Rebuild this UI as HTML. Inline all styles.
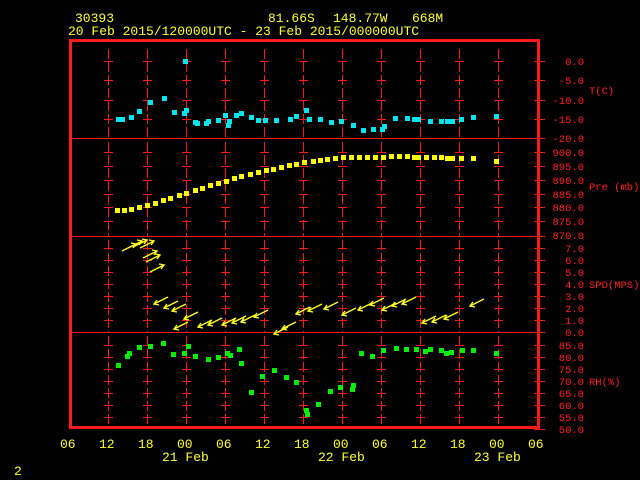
<!DOCTYPE html>
<html><head><meta charset="utf-8"><style>
html,body{margin:0;padding:0;background:#000;width:640px;height:480px;overflow:hidden}
svg{display:block}
text{font-family:"Liberation Mono",monospace}
.h{fill:#ffff33;font-size:13px}
.r{fill:#ff2020;font-size:10.5px;text-anchor:end}
.u{fill:#ff2020;font-size:10.5px}
.b{fill:#ffff33;font-size:13px}
</style></head><body>
<svg id="s" width="640" height="480" xmlns="http://www.w3.org/2000/svg">
<text class="h" x="75" y="22">30393</text>
<text class="h" x="268" y="22">81.66S</text>
<text class="h" x="333" y="22">148.77W</text>
<text class="h" x="412" y="22">668M</text>
<text class="h" x="68" y="35">20 Feb 2015/120000UTC - 23 Feb 2015/000000UTC</text>
<g id="grid" stroke="#ff1a1a" stroke-width="1"></g>
<g id="pts"></g>
<g id="wind" stroke="#ffff22" stroke-width="1.4" fill="none"></g>
<rect x="70.5" y="40.5" width="468" height="387" fill="none" stroke="#ff1a1a" stroke-width="3"/>
<text class="r" x="584" y="65">0.0</text>
<text class="r" x="584" y="84">-5.0</text>
<text class="r" x="584" y="104">-10.0</text>
<text class="r" x="584" y="123">-15.0</text>
<text class="r" x="584" y="142">-20.0</text>
<text class="u" x="589" y="94">T(C)</text>
<text class="r" x="584" y="156">900.0</text>
<text class="r" x="584" y="170">895.0</text>
<text class="r" x="584" y="184">890.0</text>
<text class="r" x="584" y="198">885.0</text>
<text class="r" x="584" y="211">880.0</text>
<text class="r" x="584" y="225">875.0</text>
<text class="r" x="584" y="239">870.0</text>
<text class="u" x="589" y="190">Pre (mb)</text>
<text class="r" x="584" y="252">7.0</text>
<text class="r" x="584" y="264">6.0</text>
<text class="r" x="584" y="276">5.0</text>
<text class="r" x="584" y="288">4.0</text>
<text class="r" x="584" y="300">3.0</text>
<text class="r" x="584" y="312">2.0</text>
<text class="r" x="584" y="324">1.0</text>
<text class="r" x="584" y="336">0.0</text>
<text class="u" x="589" y="288">SPD(MPS)</text>
<text class="r" x="584" y="349">85.0</text>
<text class="r" x="584" y="361">80.0</text>
<text class="r" x="584" y="373">75.0</text>
<text class="r" x="584" y="385">70.0</text>
<text class="r" x="584" y="397">65.0</text>
<text class="r" x="584" y="409">60.0</text>
<text class="r" x="584" y="421">55.0</text>
<text class="r" x="584" y="433">50.0</text>
<text class="u" x="589" y="385">RH(%)</text>
<text class="b" x="60" y="448">06</text>
<text class="b" x="99" y="448">12</text>
<text class="b" x="138" y="448">18</text>
<text class="b" x="177" y="448">00</text>
<text class="b" x="216" y="448">06</text>
<text class="b" x="255" y="448">12</text>
<text class="b" x="294" y="448">18</text>
<text class="b" x="333" y="448">00</text>
<text class="b" x="372" y="448">06</text>
<text class="b" x="411" y="448">12</text>
<text class="b" x="450" y="448">18</text>
<text class="b" x="489" y="448">00</text>
<text class="b" x="528" y="448">06</text>
<text class="b" x="162" y="461">21 Feb</text>
<text class="b" x="318" y="461">22 Feb</text>
<text class="b" x="474" y="461">23 Feb</text>
<text class="b" x="14" y="475">2</text>
</svg>
<script>
var NS="http://www.w3.org/2000/svg";
function el(p,t,a){var e=document.createElementNS(NS,t);for(var k in a)e.setAttribute(k,a[k]);p.appendChild(e);return e;}
var g=document.getElementById('grid');
[138,236,332].forEach(function(y){el(g,'line',{x1:70,x2:545,y1:y+.5,y2:y+.5});});
var ticks=[61,80,100,119,152,166,180,194,207,221,248,260,272,284,296,308,320,345,357,369,381,393,405,417];
var xs=[108,147,186,225,264,303,342,381,420,459,498];
xs.forEach(function(x){
 [[49,138],[142,236],[240,332],[336,426]].forEach(function(r){
  el(g,'line',{x1:x+.5,x2:x+.5,y1:r[0],y2:r[1],'stroke-dasharray':'10,3'});
 });
 ticks.forEach(function(y){el(g,'line',{x1:x-4,x2:x+5,y1:y+.5,y2:y+.5});});
});
ticks.concat([138,236,332,429]).forEach(function(y){el(g,'line',{x1:534,x2:545,y1:y+.5,y2:y+.5});});
var p=document.getElementById('pts');
function sq(arr,c){arr.forEach(function(a){el(p,'rect',{x:a[0]-2,y:a[1]-2,width:5,height:5,fill:c});});}
sq([[185,61],[118,119],[122,119],[131,117],[139,111],[150,102],[164,98],[174,112],[184,113],[186,110],[195,122],[197,123],[206,123],[208,121],[218,120],[225,115],[229,121],[228,125],[236,115],[241,113],[251,117],[258,120],[265,120],[276,120],[290,119],[296,116],[306,110],[309,119],[320,119],[331,122],[341,121],[353,125],[363,130],[373,129],[382,129],[384,126],[395,118],[407,118],[414,119],[418,119],[430,121],[441,121],[447,121],[452,121],[461,119],[473,117],[496,116]],'#00e5ee');
sq([[117,210],[124,210],[131,209],[139,207],[147,205],[155,203],[163,200],[170,198],[179,195],[186,193],[195,190],[202,188],[210,185],[218,183],[226,181],[234,178],[241,176],[250,174],[258,172],[266,170],[273,169],[281,167],[289,165],[296,164],[304,162],[313,161],[320,160],[327,159],[335,158],[343,157],[351,157],[359,157],[367,157],[375,157],[383,157],[391,156],[399,156],[407,156],[414,157],[418,157],[426,157],[434,157],[441,157],[447,158],[452,158],[461,158],[473,158],[496,161]],'#ffff00');
sq([[118,365],[127,356],[129,353],[139,347],[150,346],[163,343],[173,354],[184,353],[188,346],[195,356],[208,359],[218,357],[227,353],[230,355],[239,349],[241,363],[251,392],[262,376],[274,370],[286,377],[296,382],[306,410],[307,414],[318,404],[330,391],[340,387],[352,389],[353,385],[361,353],[372,356],[383,350],[396,348],[406,349],[416,349],[425,351],[430,349],[441,350],[446,353],[451,352],[462,350],[473,350],[496,353]],'#00ee00');
var w=document.getElementById('wind');
var wa=[[122,251,1],[128,248,1],[133,247,1],[140,248,1],[143,258,1],[146,262,1],[150,272,1],[168,297,-1],[178,301,-1],[186,304,-1],[188,322,-1],[198,312,-1],[212,320,-1],[222,318,-1],[236,318,-1],[246,316,-1],[255,315,-1],[268,310,-1],[288,327,-1],[296,322,-1],[310,307,-1],[322,304,-1],[338,302,-1],[356,308,-1],[372,303,-1],[384,298,-1],[396,303,-1],[406,299,-1],[416,297,-1],[436,316,-1],[446,315,-1],[458,312,-1],[484,299,-1]];
wa.forEach(function(a){var x=a[0],y=a[1],d=a[2];
 var x2=x+14*d,y2=y-7*d;
 el(w,'line',{x1:x,y1:y,x2:x2,y2:y2});
 el(w,'polyline',{points:(x2-5*d)+','+(y2-1*d)+' '+x2+','+y2+' '+(x2-3*d)+','+(y2+4*d)});
});
</script>
</body></html>
